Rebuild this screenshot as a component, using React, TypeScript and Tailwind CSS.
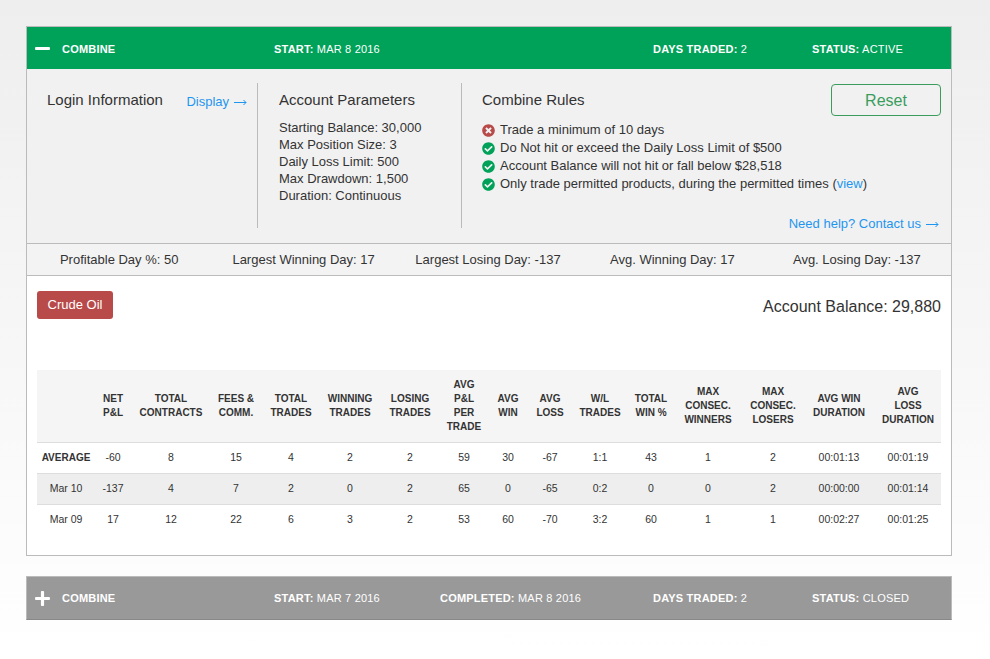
import React from 'react';
import { FaCheckCircle, FaMinus, FaPlus, FaTimesCircle } from 'react-icons/fa';

const headers = [
  [''],
  ['NET', 'P&L'],
  ['TOTAL', 'CONTRACTS'],
  ['FEES &', 'COMM.'],
  ['TOTAL', 'TRADES'],
  ['WINNING', 'TRADES'],
  ['LOSING', 'TRADES'],
  ['AVG', 'P&L', 'PER', 'TRADE'],
  ['AVG', 'WIN'],
  ['AVG', 'LOSS'],
  ['W/L', 'TRADES'],
  ['TOTAL', 'WIN %'],
  ['MAX', 'CONSEC.', 'WINNERS'],
  ['MAX', 'CONSEC.', 'LOSERS'],
  ['AVG WIN', 'DURATION'],
  ['AVG', 'LOSS', 'DURATION'],
];

const colWidths = [58, 36, 80, 50, 60, 58, 62, 46, 42, 42, 58, 44, 70, 60, 72, 66];

const rows = [
  ['AVERAGE', '-60', '8', '15', '4', '2', '2', '59', '30', '-67', '1:1', '43', '1', '2', '00:01:13', '00:01:19'],
  ['Mar 10', '-137', '4', '7', '2', '0', '2', '65', '0', '-65', '0:2', '0', '0', '2', '00:00:00', '00:01:14'],
  ['Mar 09', '17', '12', '22', '6', '3', '2', '53', '60', '-70', '3:2', '60', '1', '1', '00:02:27', '00:01:25'],
];

const params = [
  'Starting Balance: 30,000',
  'Max Position Size: 3',
  'Daily Loss Limit: 500',
  'Max Drawdown: 1,500',
  'Duration: Continuous',
];

const stats = [
  'Profitable Day %: 50',
  'Largest Winning Day: 17',
  'Largest Losing Day: -137',
  'Avg. Winning Day: 17',
  'Avg. Losing Day: -137',
];

const Arrow = () => (
  <svg width="13" height="7" viewBox="0 0 13 7" className="ml-[5px] inline-block" fill="none" stroke="currentColor">
    <path d="M0 3.5h12M9.5 1l2.5 2.5L9.5 6" />
  </svg>
);

const HeadLabel = ({ label, value }: { label: string; value: string }) => (
  <span className="whitespace-nowrap">
    <span className="font-bold">{label}</span> {value}
  </span>
);

const App: React.FC = () => {
  return (
    <div className="min-h-[659px] bg-gradient-to-b from-[#eeeeee] to-[#ffffff] px-[26px] pt-[26px] font-['Liberation_Sans',Arial,sans-serif] text-[13px] text-[#333333]">
      <div className="w-[926px] border border-[#bbbbbb]">
        <div className="flex h-[42px] items-center bg-[#00a25a] pt-[2px] text-[11px] tracking-[0.2px] text-white">
          <FaMinus className="ml-[7px] h-[17px] w-[17px] -translate-y-px" />
          <span className="ml-[11px] w-[212px] font-bold">COMBINE</span>
          <span className="w-[379px]"><HeadLabel label="START:" value="MAR 8 2016" /></span>
          <span className="w-[159px]"><HeadLabel label="DAYS TRADED:" value="2" /></span>
          <HeadLabel label="STATUS:" value="ACTIVE" />
        </div>

        <div className="flex h-[174px] bg-[#f1f1f1] pt-[14px]">
          <div className="flex h-[145px] w-[231px] items-start justify-between border-r border-[#bbbbbb] pl-[20px] pr-[9px]">
            <h3 className="pt-[8px] text-[15px] leading-[18px]">Login Information</h3>
            <a className="mt-[10px] pr-px leading-[18px] text-[#1e96f0]">Display<Arrow /></a>
          </div>
          <div className="h-[145px] w-[204px] border-r border-[#bbbbbb] pl-[21px] pt-[8px]">
            <h3 className="text-[15px] leading-[18px]">Account Parameters</h3>
            <ul className="mt-[10px] leading-[17px]">
              {params.map((line) => (
                <li key={line}>{line}</li>
              ))}
            </ul>
          </div>
          <div className="flex h-[149px] flex-1 flex-col pl-[20px] pr-[10px]">
            <div className="flex items-start justify-between">
              <h3 className="pt-[8px] text-[15px] leading-[18px]">Combine Rules</h3>
              <button className="mt-px h-[32px] w-[110px] rounded-[4px] border border-[#3a9d5d] pt-[2px] text-[16px] text-[#3a9d5d]">Reset</button>
            </div>
            <ul className="mt-[5px] leading-[18px]">
              <li className="flex items-center gap-[5px]"><FaTimesCircle className="h-[13px] w-[13px] text-[#b84a4a]" />Trade a minimum of 10 days</li>
              <li className="flex items-center gap-[5px]"><FaCheckCircle className="h-[13px] w-[13px] text-[#00a25a]" />Do Not hit or exceed the Daily Loss Limit of $500</li>
              <li className="flex items-center gap-[5px]"><FaCheckCircle className="h-[13px] w-[13px] text-[#00a25a]" />Account Balance will not hit or fall below $28,518</li>
              <li className="flex items-center gap-[5px]">
                <FaCheckCircle className="h-[13px] w-[13px] text-[#00a25a]" />
                <span>Only trade permitted products, during the permitted times (<a className="text-[#1e96f0]">view</a>)</span>
              </li>
            </ul>
            <a className="mt-auto self-end pr-[2px] leading-[17px] text-[#1e96f0]">Need help? Contact us<Arrow /></a>
          </div>
        </div>

        <div className="grid h-[33px] grid-cols-5 items-center border-y border-[#bbbbbb] bg-[#f3f3f3] pr-[2px] pt-[1px] text-center">
          {stats.map((s) => (
            <span key={s}>{s}</span>
          ))}
        </div>

        <div className="bg-white px-[10px] pb-[20px] pt-[15px]">
          <div className="flex items-start justify-between">
            <button className="h-[28px] w-[76px] rounded-[3px] bg-[#b84a4a] text-[13px] text-white">Crude Oil</button>
            <div className="pt-[7px] text-[16px] leading-[18px]">Account Balance: 29,880</div>
          </div>
          <table className="mt-[51px] w-[904px] table-fixed border-collapse text-center text-[10.5px]">
            <colgroup>
              {colWidths.map((w, i) => (
                <col key={i} style={{ width: w }} />
              ))}
            </colgroup>
            <thead>
              <tr className="h-[72px] border-b border-[#dddddd] bg-[#f5f5f5]">
                {headers.map((lines, i) => (
                  <th key={i} className="p-0 text-[10px] font-bold leading-[14px]">
                    {lines.map((l, j) => (
                      <div key={j} className="whitespace-nowrap">{l}</div>
                    ))}
                  </th>
                ))}
              </tr>
            </thead>
            <tbody>
              {rows.map((row, r) => (
                <tr key={row[0]} className={`h-[31px] border-b border-[#dddddd] last:border-b-0 ${r === 1 ? 'bg-[#eeeeee]' : 'bg-white'}`}>
                  {row.map((cell, i) => (
                    <td key={i} className={`whitespace-nowrap p-0 ${r === 0 && i === 0 ? 'text-[10px] font-bold' : ''}`}>{cell}</td>
                  ))}
                </tr>
              ))}
            </tbody>
          </table>
        </div>
      </div>

      <div className="mt-[20px] flex h-[44px] w-[926px] items-center border border-[#bbbbbb] border-b-[#888888] bg-[#999999] text-[11px] tracking-[0.2px] text-white">
        <FaPlus className="ml-[7px] h-[17px] w-[17px]" />
        <span className="ml-[11px] w-[212px] font-bold">COMBINE</span>
        <span className="w-[166px]"><HeadLabel label="START:" value="MAR 7 2016" /></span>
        <span className="w-[213px]"><HeadLabel label="COMPLETED:" value="MAR 8 2016" /></span>
        <span className="w-[159px]"><HeadLabel label="DAYS TRADED:" value="2" /></span>
        <HeadLabel label="STATUS:" value="CLOSED" />
      </div>
    </div>
  );
};

export default App;
